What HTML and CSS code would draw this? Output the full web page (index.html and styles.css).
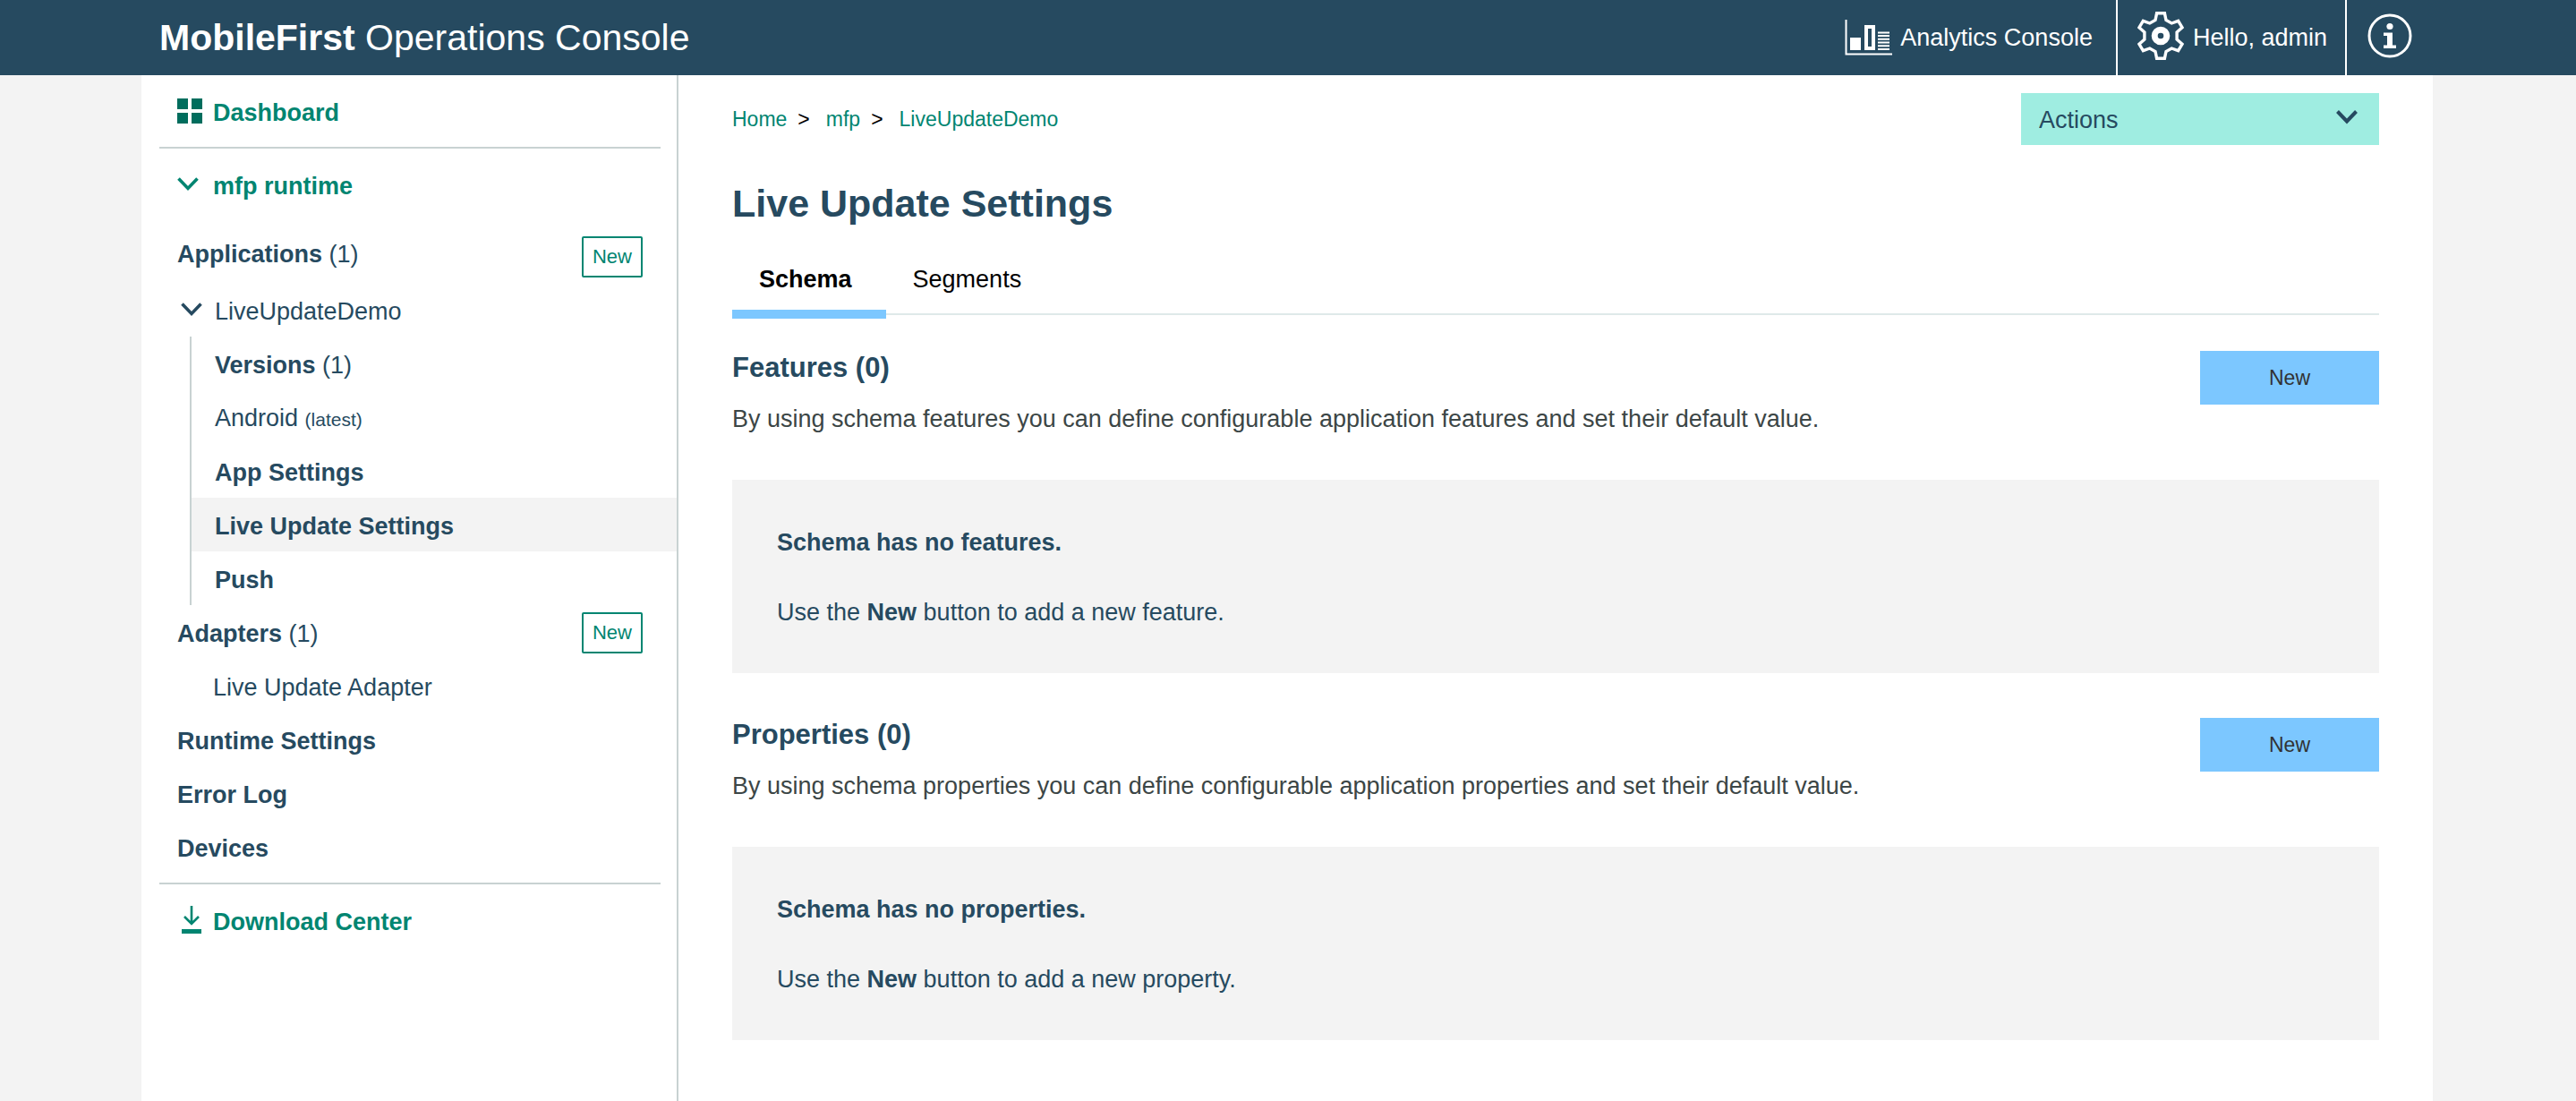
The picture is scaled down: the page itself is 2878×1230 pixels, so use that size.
FILE: index.html
```html
<!DOCTYPE html>
<html lang="en">
<head>
<meta charset="utf-8">
<meta name="viewport" content="width=device-width, initial-scale=1">
<title>MobileFirst Operations Console</title>
<link rel="stylesheet" href="styles.css">
</head>
<body>
<header class="topbar">
  <div class="brand"><strong>MobileFirst</strong> Operations Console</div>
  <nav class="topnav" aria-label="Account">
    <a class="topnav-item" href="#">
      <svg class="icon-analytics" width="54" height="40" viewBox="0 0 54 40" aria-hidden="true">
        <path d="M1.5 0v38.5H53" fill="none" stroke="#fff" stroke-width="2"/>
        <path d="M6 20h12v14H6z" fill="#fff"/>
        <path d="M24 8h8v24h-8z" fill="none" stroke="#fff" stroke-width="4"/>
        <path d="M37 14.500h13M37 18h13M37 21.700h13M37 25.500h13M37 29.200h13M37 33h13" stroke="#fff" stroke-width="2"/>
      </svg>
      Analytics Console
    </a>
    <a class="topnav-item topnav-user" href="#">
      <svg width="52" height="54" viewBox="0 0 52 54" aria-hidden="true">
        <path d="M21.600 1.800h8.800l1.600 7.700 6.200 3.500 7.400-2.700 4.400 7.400-5.900 5.300v8l5.900 5.300-4.400 7.400-7.400-2.700-6.200 3.500-1.600 7.700h-8.800l-1.600-7.700-6.200-3.500-7.400 2.700L2 36.300 7.900 31v-8L2 17.700l4.400-7.400 7.400 2.700 6.200-3.500z" fill="none" stroke="#fff" stroke-width="3.400"/>
        <circle cx="26" cy="27" r="6.800" fill="none" stroke="#fff" stroke-width="7"/>
      </svg>
      Hello, admin
    </a>
    <button class="topnav-item topnav-info" type="button" aria-label="About">
      <svg width="50" height="50" viewBox="0 0 50 50" aria-hidden="true">
        <circle cx="25" cy="25" r="23" fill="none" stroke="#fff" stroke-width="3"/>
        <circle cx="25" cy="14.500" r="3.600" fill="#fff"/>
        <path d="M18 21.500h10v14h4V39H18v-3.500h4V25h-4z" fill="#fff"/>
      </svg>
    </button>
  </nav>
</header>

<div class="shell">
  <aside class="sidebar">
    <nav aria-label="Console">
      <a class="row row-green" href="#">
        <span class="slot"><svg width="28" height="28" viewBox="0 0 28 28" aria-hidden="true"><path d="M0 0h12v12H0zM16 0h12v12H16zM0 16h12v12H0zM16 16h12v12H16z" fill="#006d5d"/></svg></span>
        <strong>Dashboard</strong>
      </a>
      <hr class="rule">
      <a class="row row-green" href="#">
        <span class="slot"><svg width="24" height="16" viewBox="0 0 24 16" aria-hidden="true"><path d="M1.500 1.500L12 12.500 22.500 1.500" fill="none" stroke="currentColor" stroke-width="3.600"/></svg></span>
        <strong>mfp runtime</strong>
      </a>
      <div class="row row-lead">
        <a href="#"><strong>Applications</strong> (1)</a>
        <button class="outline-button" type="button">New</button>
      </div>
      <a class="row row-app" href="#">
        <span class="slot"><svg width="24" height="16" viewBox="0 0 24 16" aria-hidden="true"><path d="M1.500 1.500L12 12.500 22.500 1.500" fill="none" stroke="currentColor" stroke-width="3.600"/></svg></span>
        LiveUpdateDemo
      </a>
      <ul class="tree">
        <li><a class="row" href="#"><span><strong>Versions</strong> (1)</span></a></li>
        <li><a class="row" href="#"><span>Android <small>(latest)</small></span></a></li>
        <li><a class="row" href="#"><strong>App Settings</strong></a></li>
        <li><a class="row row-current" href="#" aria-current="page"><strong>Live Update Settings</strong></a></li>
        <li><a class="row" href="#"><strong>Push</strong></a></li>
      </ul>
      <div class="row">
        <a href="#"><strong>Adapters</strong> (1)</a>
        <button class="outline-button" type="button">New</button>
      </div>
      <a class="row row-child" href="#">Live Update Adapter</a>
      <a class="row" href="#"><strong>Runtime Settings</strong></a>
      <a class="row" href="#"><strong>Error Log</strong></a>
      <a class="row" href="#"><strong>Devices</strong></a>
      <hr class="rule">
      <a class="row row-green" href="#">
        <span class="slot"><svg width="32" height="32" viewBox="0 0 32 32" aria-hidden="true"><path d="M16 0v19M8 12l8 8 8-8" fill="none" stroke="currentColor" stroke-width="2.600"/><path d="M5 26h22v5H5z" fill="currentColor"/></svg></span>
        <strong>Download Center</strong>
      </a>
    </nav>
  </aside>

  <main class="main">
    <div class="main-top">
      <nav class="crumbs" aria-label="Breadcrumb">
        <a href="#">Home</a><span class="crumb-mark">&gt;</span>
        <a href="#">mfp</a><span class="crumb-mark">&gt;</span>
        <a href="#">LiveUpdateDemo</a>
      </nav>
      <div class="actions">
        <select class="actions-select" aria-label="Actions"><option>Actions</option></select>
        <svg class="actions-arrow" width="24" height="16" viewBox="0 0 24 16" aria-hidden="true"><path d="M1.500 1.500L12 12.500 22.500 1.500" fill="none" stroke="currentColor" stroke-width="4"/></svg>
      </div>
    </div>

    <h1>Live Update Settings</h1>

    <div class="tabs" role="tablist">
      <button class="tab tab-active" type="button" role="tab" aria-selected="true">Schema</button>
      <button class="tab" type="button" role="tab" aria-selected="false">Segments</button>
    </div>

    <section class="section">
      <div class="section-head">
        <div>
          <h2>Features (0)</h2>
          <p class="lead">By using schema features you can define configurable application features and set their default value.</p>
        </div>
        <button class="new-button" type="button">New</button>
      </div>
      <div class="empty">
        <p><strong>Schema has no features.</strong></p>
        <p>Use the <strong>New</strong> button to add a new feature.</p>
      </div>
    </section>

    <section class="section">
      <div class="section-head">
        <div>
          <h2>Properties (0)</h2>
          <p class="lead">By using schema properties you can define configurable application properties and set their default value.</p>
        </div>
        <button class="new-button" type="button">New</button>
      </div>
      <div class="empty">
        <p><strong>Schema has no properties.</strong></p>
        <p>Use the <strong>New</strong> button to add a new property.</p>
      </div>
    </section>
  </main>
</div>
</body>
</html>
```
FILE: styles.css
```css
:root {
  --navy: #264a60;
  --green: #008571;
  --sky: #7cc7ff;
  --mint: #9fede1;
  --grey: #f3f3f3;
  --line: #c8d2d2;
}

* { box-sizing: border-box; }

body {
  margin: 0;
  min-height: 100vh;
  display: flex;
  flex-direction: column;
  background: var(--grey);
  color: var(--navy);
  font: 27px/40px "Liberation Sans", Arial, sans-serif;
}

a { color: inherit; text-decoration: none; }
button, select { font: inherit; color: inherit; border: 0; border-radius: 0; padding: 0; cursor: pointer; }
h1, h2, p, ul { margin: 0; padding: 0; }
svg { display: block; flex: none; }

/* Top bar */
.topbar {
  display: flex;
  justify-content: space-between;
  padding: 0 160px 0 178px;
  height: 84px;
  background: var(--navy);
  color: #fff;
}
.brand { font-size: 41px; line-height: 84px; }
.topnav { display: flex; }
.topnav-item {
  display: flex;
  align-items: center;
  gap: 8px;
  padding: 0 26px 0 0;
}
.topnav-user { gap: 10px; padding: 0 20px 0 22px; border: solid #fff; border-width: 0 2px; }
.topnav-user svg { margin-top: -4px; }
.topnav-info { padding: 0 23px 4px; background: none; }

/* Page shell */
.shell {
  flex: 1;
  display: grid;
  grid-template-columns: 600px minmax(0, 1fr);
  margin: 0 160px 0 158px;
  background: #fff;
}

/* Sidebar */
.sidebar { padding-top: 10px; border-right: 2px solid var(--line); }
.row {
  display: flex;
  align-items: center;
  height: 60px;
  padding: 4px 38px 0 40px;
  line-height: 56px;
}
.row-green { color: var(--green); }
.row-lead { margin: 16px 0 4px; }
.row-app { padding-left: 44px; }
.row-app .slot { width: 38px; }
.row-child { padding-left: 80px; }
.slot { width: 40px; margin-top: -4px; }
.rule {
  height: 2px;
  margin: 10px 18px 10px 20px;
  border: 0;
  background: var(--line);
}
.outline-button {
  align-self: flex-start;
  width: 68px;
  height: 46px;
  margin: 4px 0 0 auto;
  border: 2px solid var(--green);
  border-radius: 2px;
  background: #fff;
  color: var(--green);
  font-size: 22px;
  line-height: 42px;
}
.row-lead .outline-button { margin-top: 8px; }
.tree {
  margin-left: 54px;
  border-left: 2px solid var(--line);
  list-style: none;
}
.tree .row { padding-left: 26px; }
.tree small { font-size: 21px; }
.row-current { background: var(--grey); }

/* Main column */
.main { padding: 20px 60px 68px; }
.main-top { display: flex; justify-content: space-between; }
.crumbs {
  display: flex;
  font-size: 23px;
  line-height: 58px;
  color: var(--green);
}
.crumb-mark { margin: 0 18px 0 12px; color: #000; }
.actions { position: relative; width: 400px; color: var(--navy); }
.actions-select {
  display: block;
  appearance: none;
  width: 100%;
  height: 58px;
  padding: 2px 60px 0 20px;
  background: var(--mint);
}
.actions-arrow { position: absolute; top: 19px; right: 24px; pointer-events: none; }

h1 { margin-top: 40px; font-size: 43px; line-height: 50px; }

.tabs {
  display: flex;
  margin-top: 40px;
  border-bottom: 2px solid #dfe9e9;
}
.tab {
  margin-bottom: -6px;
  padding: 0 38px 14px 30px;
  border-bottom: 10px solid transparent;
  background: none;
  color: #000;
}
.tab-active { border-color: var(--sky); font-weight: bold; }

.section { margin-top: 40px; }
.section + .section { margin-top: 50px; }
.section-head {
  display: flex;
  justify-content: space-between;
  align-items: flex-start;
}
h2 { font-size: 31px; line-height: 38px; }
.lead { margin-top: 18px; color: #3c4646; }
.new-button {
  flex: none;
  width: 200px;
  height: 60px;
  background: var(--sky);
  color: #323232;
  font-size: 23px;
}
.empty {
  display: flex;
  flex-direction: column;
  gap: 38px;
  margin-top: 48px;
  padding: 50px 50px 48px;
  background: var(--grey);
}
```
